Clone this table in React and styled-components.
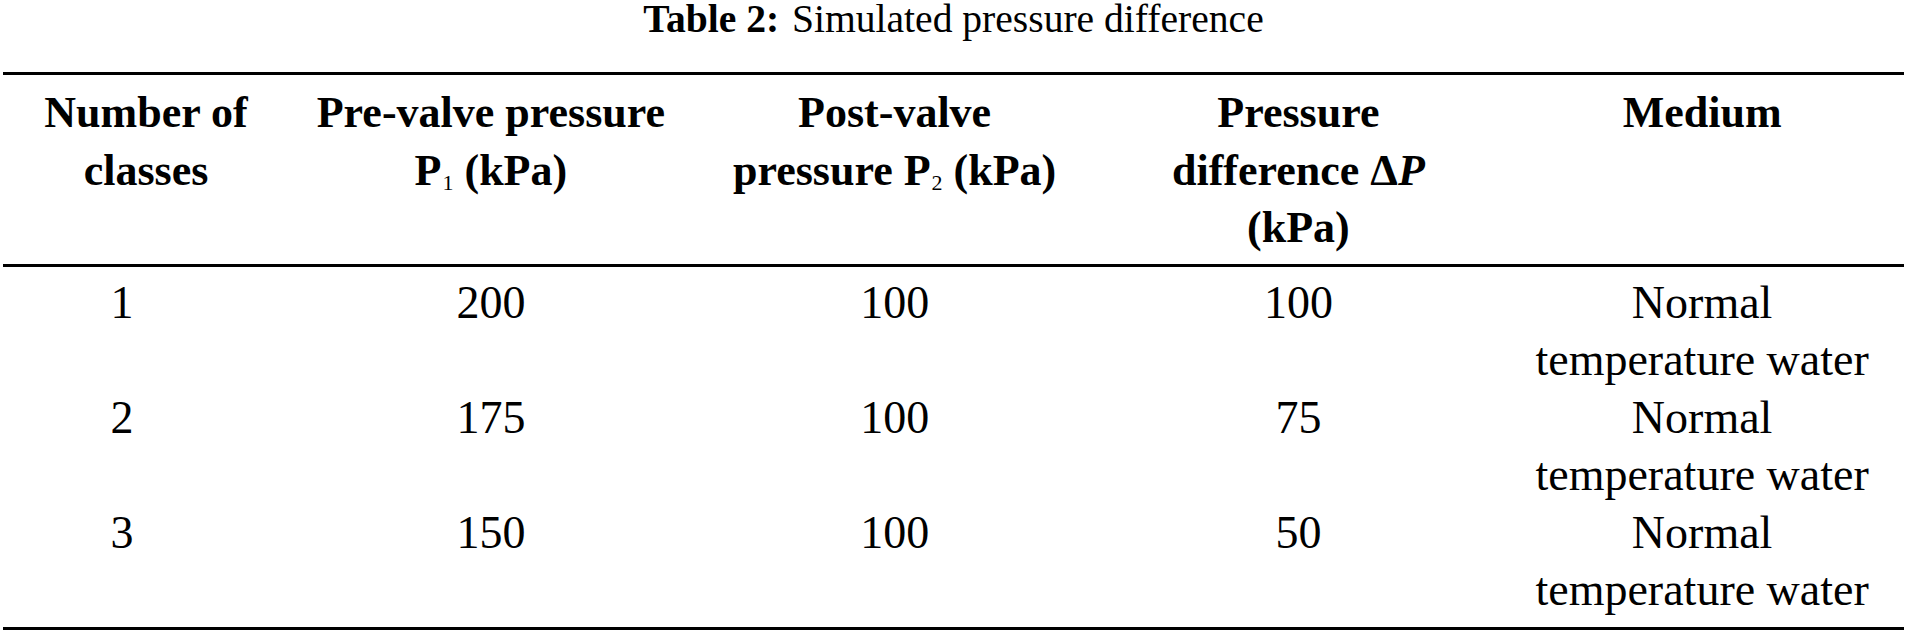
import React from "react";
import styled, { createGlobalStyle } from "styled-components";

const serif = `"Liberation Serif", "Times New Roman", Times, serif`;

const Global = createGlobalStyle`
  html, body { margin: 0; padding: 0; background: #fff; }
  body { font-family: ${serif}; color: #000; }
`;

const Page = styled.div`
  padding: 0 3px;
  font-family: ${serif};
`;

const Caption = styled.div`
  font-family: ${serif};
  text-align: center;
  font-size: 39.6px;
  line-height: 38px;
  white-space: nowrap;
`;

const CaptionLabel = styled.span`
  font-weight: bold;
  margin-right: 0.32em;
`;

const Table = styled.div`
  margin-top: 34px;
  border-top: 3px solid #000;
  border-bottom: 3px solid #000;
`;

const Grid = styled.div`
  display: grid;
  grid-template-columns: 286px repeat(4, 1fr);
`;

const HeadRow = styled(Grid)`
  padding: 9px 0 7px;
  border-bottom: 3px solid #000;
`;

const Body = styled.div`
  padding: 7px 0 8px;
`;

const Row = styled(Grid)``;

const HeadCell = styled.div`
  font-family: ${serif};
  font-weight: bold;
  font-size: 44px;
  line-height: 57.5px;
  text-align: center;
  align-self: start;
  padding: 0 ${(p) => p.$pad || 0}px;
`;

const Cell = styled.div`
  font-family: ${serif};
  font-size: 46px;
  line-height: 57.5px;
  text-align: center;
  align-self: start;
  padding-right: ${(p) => p.$shift || 0}px;
`;

const Sub = styled.span`
  font-size: 0.5em;
  vertical-align: -0.25em;
  line-height: 0;
  margin-left: 1px;
  font-weight: normal;
`;

const Ital = styled.i`
  font-style: italic;
`;

const rows = [
  ["1", "200", "100", "100"],
  ["2", "175", "100", "75"],
  ["3", "150", "100", "50"],
];

export default function App() {
  return (
    <Page>
      <Global />
      <Caption>
        <CaptionLabel>Table 2:</CaptionLabel>Simulated pressure difference
      </Caption>
      <Table>
        <HeadRow>
          <HeadCell $pad={30}>Number of classes</HeadCell>
          <HeadCell $pad={20}>
            Pre-valve pressure P<Sub>1</Sub> (kPa)
          </HeadCell>
          <HeadCell $pad={30}>
            Post-valve pressure P<Sub>2</Sub> (kPa)
          </HeadCell>
          <HeadCell $pad={70}>
            Pressure difference Δ<Ital>P</Ital> (kPa)
          </HeadCell>
          <HeadCell>Medium</HeadCell>
        </HeadRow>
        <Body>
          {rows.map((r) => (
            <Row key={r[0]}>
              <Cell $shift={48}>{r[0]}</Cell>
              <Cell>{r[1]}</Cell>
              <Cell>{r[2]}</Cell>
              <Cell>{r[3]}</Cell>
              <Cell>
                Normal
                <br />
                temperature water
              </Cell>
            </Row>
          ))}
        </Body>
      </Table>
    </Page>
  );
}
